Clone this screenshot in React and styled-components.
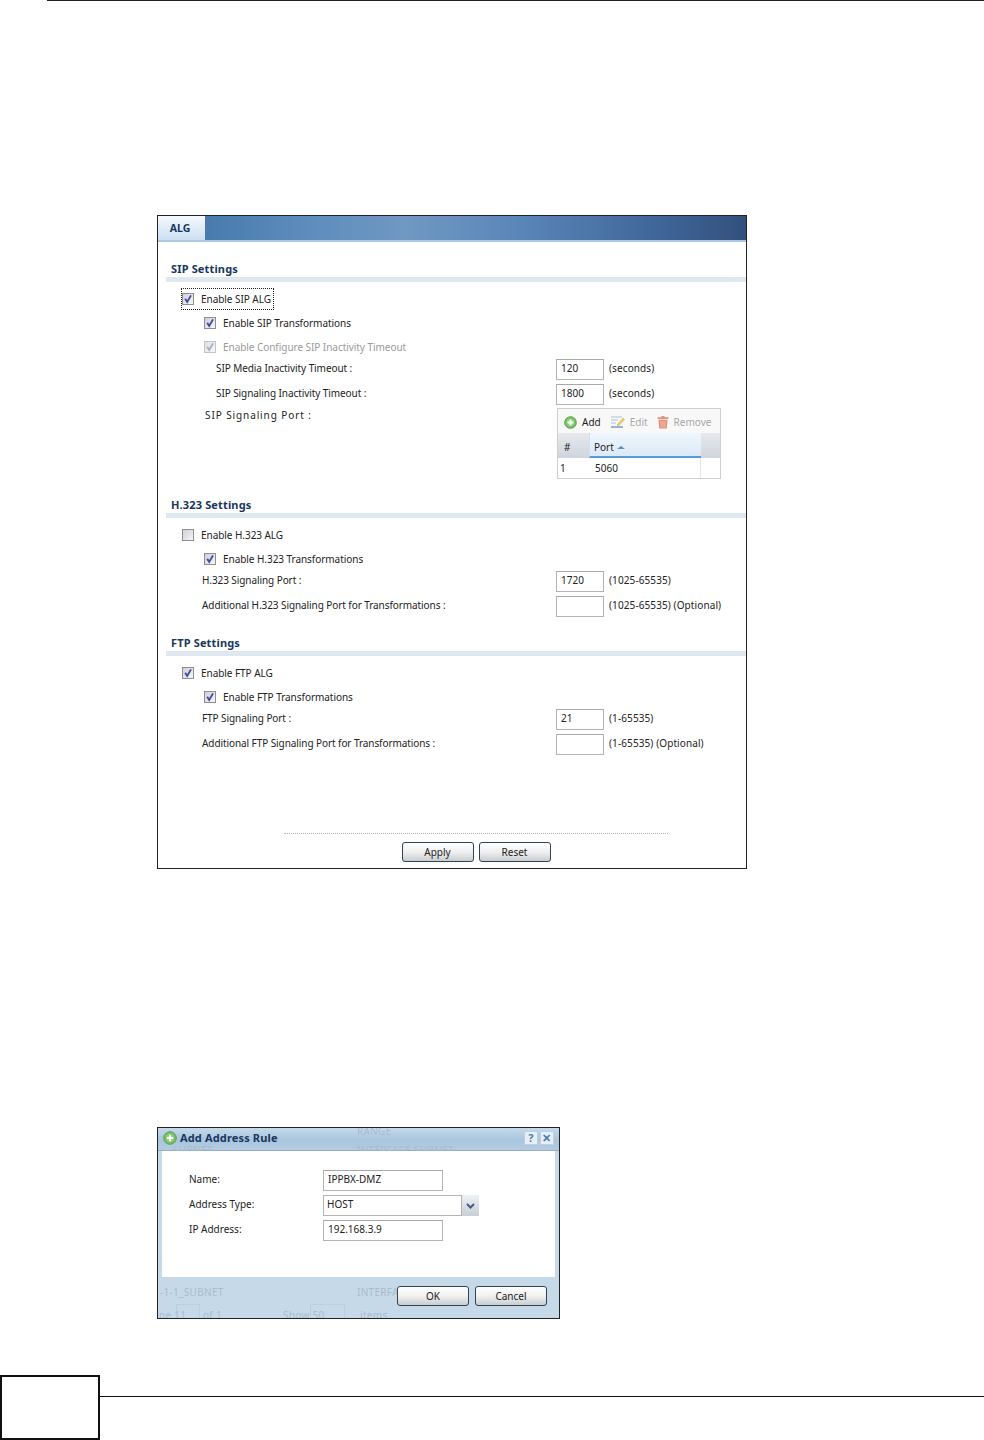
import React from "react";
import styled, { createGlobalStyle } from "styled-components";

//#region Styled Components
const Global = createGlobalStyle`
  html, body {
    margin: 0;
    background: #fff;
    font-family: "Noto Sans", "Liberation Sans", sans-serif;
    font-size: 10px;
    color: #222;
  }
`;
const Page = styled.div`
  width: 984px;
  height: 1440px;
  overflow: hidden;
  display: flex;
  flex-flow: column nowrap;
`;
const TopRule = styled.div`
  height: 1px;
  margin-left: 47px;
  background: #222;
`;
const Panel = styled.div`
  box-sizing: border-box;
  display: flex;
  flex-flow: column nowrap;
  width: 590px;
  height: 654px;
  margin: 214px 0 0 157px;
  border: 1px solid #222;
`;
const TabBar = styled.div`
  display: flex;
  height: 24px;
  border-bottom: 2px solid #a9c8e4;
  background: linear-gradient(90deg, #3f72a8 0%, #5d8cbc 25%, #6f98c2 42%, #5a85b8 62%, #3f6699 85%, #33507c 100%);
`;
const Tab = styled.div`
  width: 47px;
  padding-right: 3px;
  box-sizing: border-box;
  display: flex;
  align-items: center;
  justify-content: center;
  background: linear-gradient(#f5f9fd, #cbdff2);
  color: #17375e;
  font-weight: 700;
  font-size: 10.5px;
`;
const Section = styled.section`
  margin-top: ${p => p.$top}px;
  padding-left: 8px;
`;
const Heading = styled.h3`
  margin: 0 0 0 5px;
  height: 16px;
  line-height: 15px;
  color: #17375e;
  font-size: 11px;
  font-weight: 700;
  letter-spacing: 0.15px;
`;
const Divider = styled.div`
  height: 5px;
  margin-bottom: 5px;
  background: #dfe8ef;
`;
const CheckRow = styled.div`
  height: 24px;
  display: flex;
  align-items: center;
  padding-left: ${p => p.$indent}px;
  color: ${p => (p.$muted ? "#9a9a9a" : "#222")};
`;
const CheckLabel = styled.label`
  display: inline-flex;
  align-items: center;
  gap: 7px;
  height: 20px;
  padding-right: 2px;
  letter-spacing: -0.05px;
  outline: ${p => (p.$focus ? "1px dotted #222" : "none")};
`;
const Box = styled.span`
  box-sizing: border-box;
  width: 12px;
  height: 12px;
  border: 1px solid ${p => (p.$muted ? "#c4c4c4" : "#8f8f8f")};
  background: linear-gradient(135deg, ${p => (p.$muted ? "#e0e0e2" : "#cfcfd6")}, #f7f7f9);
  display: flex;
  align-items: center;
  justify-content: center;
`;
const FieldRow = styled.div`
  display: grid;
  grid-template-columns: 390px 48px 1fr;
  height: 25px;
`;
const FieldLabel = styled.div`
  padding-left: ${p => p.$indent}px;
  line-height: 19px;
  letter-spacing: -0.08px;
`;
const Input = styled.div`
  box-sizing: border-box;
  width: ${p => p.$w || 48}px;
  height: 21px;
  padding-left: 4px;
  line-height: 16px;
  border: 1px solid #b4b4b4;
  border-top-color: #a8a8a8;
  background: #fff;
  color: #222;
`;
const Hint = styled.div`
  padding-left: 5px;
  line-height: 19px;
  white-space: nowrap;
  letter-spacing: 0.1px;
`;
const PortRow = styled.div`
  display: grid;
  grid-template-columns: 391px 164px;
  margin-top: -1px;
`;
const PortLabel = styled.div`
  padding: 0 0 0 39px;
  line-height: 14px;
  letter-spacing: 0.9px;
`;
const PortTable = styled.div`
  box-sizing: border-box;
  height: 71px;
  border: 1px solid #cfcfcf;
`;
const Toolbar = styled.div`
  box-sizing: border-box;
  height: 24px;
  display: flex;
  align-items: center;
  padding: 2px 0 0 6px;
  background: #f8f8f8;
`;
const ToolItem = styled.span`
  display: inline-flex;
  align-items: center;
  gap: 5px;
  margin-right: 9px;
  color: ${p => (p.$disabled ? "#a8a8a8" : "#222")};
`;
const HeadRow = styled.div`
  display: grid;
  grid-template-columns: 31px 112px 1fr;
  grid-template-rows: 25px;
  height: 25px;
  background: linear-gradient(#e6e9ec, #cdd5dc);
`;
const HeadCell = styled.div`
  box-sizing: border-box;
  height: 25px;
  padding: 3px 0 0 ${p => p.$pad}px;
  line-height: 22px;
  ${p => p.$sorted && "background: linear-gradient(#f0f7fd, #dbe9f7); border-bottom: 2px solid #5a9bd5; border-left: 1px solid #cfe0f0;"}
`;
const SortArrow = styled.span`
  display: inline-block;
  margin-left: 3px;
  vertical-align: 2px;
  border: 4px solid transparent;
  border-top: 0;
  border-bottom: 3px solid #5a8fc7;
`;
const BodyRow = styled.div`
  display: grid;
  grid-template-columns: 31px 112px 1fr;
  height: 20px;
  line-height: 20px;
`;
const BodyCell = styled.div`
  padding-left: ${p => p.$pad}px;
  border-right: ${p => (p.$line ? "1px solid #e4e4e4" : "0")};
`;
const ActionBar = styled.div`
  margin-top: auto;
  padding: 0 0 6px 48px;
  display: flex;
  flex-flow: column nowrap;
  align-items: center;
`;
const Dotted = styled.div`
  width: 384px;
  border-top: 1px dotted #b5b5b5;
`;
const ButtonRow = styled.div`
  display: flex;
  gap: ${p => p.$gap}px;
  margin-top: ${p => p.$top}px;
`;
const Button = styled.button`
  box-sizing: border-box;
  width: 72px;
  height: 20px;
  padding: 0;
  border: 1px solid #2f4358;
  border-radius: 3px;
  background: linear-gradient(#ffffff 0%, #f0f0f0 50%, #c9cdd1 100%);
  color: #222;
  font-family: inherit;
  font-size: 10px;
`;
const Dialog = styled.div`
  position: relative;
  box-sizing: border-box;
  width: 403px;
  height: 192px;
  margin: 258px 0 0 157px;
  border: 1px solid #222;
  background: #c6d9e8;
  display: flex;
  flex-flow: column nowrap;
  overflow: hidden;
`;
const Ghost = styled.span`
  position: absolute;
  left: ${p => p.$x}px;
  top: ${p => p.$y}px;
  color: #a8bccd;
  letter-spacing: 0.3px;
  white-space: nowrap;
`;
const GhostCell = styled.span`
  position: absolute;
  left: ${p => p.$x}px;
  top: 176px;
  width: ${p => p.$w}px;
  height: 20px;
  border: 1px solid #bccfdf;
`;
const DialogTitle = styled.div`
  position: relative;
  box-sizing: border-box;
  height: 23px;
  display: flex;
  align-items: center;
  gap: 3px;
  padding: 0 5px 3px;
  border-bottom: 1px solid #94aec8;
  background: linear-gradient(#c5d9ea 0, #a9c5df 55%, #b4cbe0 100%);
  color: #17375e;
  font-weight: 700;
  font-size: 11px;
  letter-spacing: 0.15px;
`;
const TitleText = styled.span`
  flex: 1;
`;
const TitleBtn = styled.span`
  box-sizing: border-box;
  width: 14px;
  height: 14px;
  margin-left: -1px;
  display: flex;
  align-items: center;
  justify-content: center;
  background: #e6eff7;
  border: 1px solid #bdd0e2;
  color: #4a7db0;
  font-size: 11px;
`;
const DialogBody = styled.div`
  position: relative;
  box-sizing: border-box;
  height: 126px;
  margin: 0 4px;
  padding-top: 19px;
  background: #fff;
`;
const DialogRow = styled.div`
  display: grid;
  grid-template-columns: 161px auto;
  justify-content: start;
  height: 25px;
`;
const DialogLabel = styled.div`
  padding-left: 27px;
  line-height: 19px;
`;
const Select = styled.div`
  box-sizing: border-box;
  width: 156px;
  height: 21px;
  display: flex;
  border: 1px solid #b4b4b4;
  line-height: 17px;
  padding-left: 3px;
`;
const SelectValue = styled.span`
  flex: 1;
`;
const SelectArrow = styled.span`
  width: 17px;
  margin: -1px -1px -1px 0;
  display: flex;
  align-items: center;
  justify-content: center;
  background: linear-gradient(#eef1f4, #c9ced3);
  border-left: 1px solid #b4b4b4;
`;
const DialogActions = styled.div`
  position: relative;
  display: flex;
  justify-content: flex-end;
  padding-right: 12px;
`;
const Footer = styled.footer`
  display: flex;
  margin-top: 56px;
  height: 65px;
`;
const PageBox = styled.div`
  box-sizing: border-box;
  width: 100px;
  height: 65px;
  border: 2px solid #111;
`;
const FooterRule = styled.div`
  flex: 1;
  height: 1px;
  margin-top: 21px;
  background: #111;
`;
//#endregion

const Check = ({ muted }) => (
  <Box $muted={muted}>
    <svg width="10" height="10" viewBox="0 0 10 10" fill="none">
      <path d="M2.2 4.8 L4.2 8 L8 1.4" stroke={muted ? "#a9b0c4" : "#3f4f9e"} strokeWidth="1.9" />
    </svg>
  </Box>
);

const AddIcon = ({ size = 13 }) => (
  <svg width={size} height={size} viewBox="0 0 14 14">
    <circle cx="7" cy="7" r="6.3" fill="#74bd62" stroke="#5ea35a" />
    <circle cx="7" cy="7" r="4.2" fill="#8fd07e" />
    <path d="M7 3.8 V10.2 M3.8 7 H10.2" stroke="#fff" strokeWidth="2" />
  </svg>
);

const EditIcon = () => (
  <svg width="15" height="14" viewBox="0 0 15 14" fill="none">
    <path d="M1 2 H12 M1 5 H8 M1 8 H6" stroke="#a9bfd8" strokeWidth="1.2" />
    <path d="M1 12 H13" stroke="#7fa6d0" strokeWidth="1.6" />
    <path d="M7 10 L13 3 L14.5 4.5 L8.5 11 Z" fill="#efcf78" stroke="#d2a94e" strokeWidth="0.6" />
  </svg>
);

const TrashIcon = () => (
  <svg width="12" height="14" viewBox="0 0 12 14">
    <path d="M4.5 1 H7.5 V2.2 H11.5 V4 H0.5 V2.2 H4.5 Z" fill="#e2917a" />
    <path d="M1.5 4.8 H10.5 L9.8 13.5 H2.2 Z" fill="#e58f76" />
    <path d="M4 6 V12.5 M6 6 V12.5 M8 6 V12.5" stroke="#f6c9ba" strokeWidth="0.8" />
  </svg>
);

const CheckItem = ({ indent, focus, muted, checked = true, children }) => (
  <CheckRow $indent={indent} $muted={muted}>
    <CheckLabel $focus={focus}>
      {checked ? <Check muted={muted} /> : <Box />}
      {children}
    </CheckLabel>
  </CheckRow>
);

const Field = ({ label, indent, value, hint }) => (
  <FieldRow>
    <FieldLabel $indent={indent}>{label}</FieldLabel>
    <Input>{value}</Input>
    <Hint>{hint}</Hint>
  </FieldRow>
);

const App = () => (
  <Page>
    <Global />
    <TopRule />
    <Panel>
      <TabBar>
        <Tab>ALG</Tab>
      </TabBar>
      <Section $top={19}>
        <Heading>SIP Settings</Heading>
        <Divider />
        <CheckItem indent={16} focus>Enable SIP ALG</CheckItem>
        <CheckItem indent={38}>Enable SIP Transformations</CheckItem>
        <CheckItem indent={38} muted>Enable Configure SIP Inactivity Timeout</CheckItem>
        <Field label="SIP Media Inactivity Timeout :" indent={50} value="120" hint="(seconds)" />
        <Field label="SIP Signaling Inactivity Timeout :" indent={50} value="1800" hint="(seconds)" />
        <PortRow>
          <PortLabel>SIP Signaling Port :</PortLabel>
          <PortTable>
            <Toolbar>
              <ToolItem><AddIcon />Add</ToolItem>
              <ToolItem $disabled><EditIcon />Edit</ToolItem>
              <ToolItem $disabled><TrashIcon />Remove</ToolItem>
            </Toolbar>
            <HeadRow>
              <HeadCell $pad={6}>#</HeadCell>
              <HeadCell $pad={4} $sorted>Port<SortArrow /></HeadCell>
              <HeadCell />
            </HeadRow>
            <BodyRow>
              <BodyCell $pad={2}>1</BodyCell>
              <BodyCell $pad={6} $line>5060</BodyCell>
              <BodyCell />
            </BodyRow>
          </PortTable>
        </PortRow>
      </Section>
      <Section $top={18}>
        <Heading>H.323 Settings</Heading>
        <Divider />
        <CheckItem indent={16} checked={false}>Enable H.323 ALG</CheckItem>
        <CheckItem indent={38}>Enable H.323 Transformations</CheckItem>
        <Field label="H.323 Signaling Port :" indent={36} value="1720" hint="(1025-65535)" />
        <Field label="Additional H.323 Signaling Port for Transformations :" indent={36} hint="(1025-65535) (Optional)" />
      </Section>
      <Section $top={14}>
        <Heading>FTP Settings</Heading>
        <Divider />
        <CheckItem indent={16}>Enable FTP ALG</CheckItem>
        <CheckItem indent={38}>Enable FTP Transformations</CheckItem>
        <Field label="FTP Signaling Port :" indent={36} value="21" hint="(1-65535)" />
        <Field label="Additional FTP Signaling Port for Transformations :" indent={36} hint="(1-65535) (Optional)" />
      </Section>
      <ActionBar>
        <Dotted />
        <ButtonRow $gap={5} $top={8}>
          <Button>Apply</Button>
          <Button>Reset</Button>
        </ButtonRow>
      </ActionBar>
    </Panel>
    <Dialog>
      <DialogTitle>
        <AddIcon size={14} />
        <TitleText>Add Address Rule</TitleText>
        <TitleBtn>?</TitleBtn>
        <TitleBtn>✕</TitleBtn>
      </DialogTitle>
      <Ghost $x={199} $y={-4}>RANGE</Ghost>
      <Ghost $x={199} $y={15}>INTERFACE SUBNET</Ghost>
      <Ghost $x={15} $y={15}>SUBNET</Ghost>
      <Ghost $x={2} $y={157}>-1-1_SUBNET</Ghost>
      <Ghost $x={199} $y={157}>INTERFA</Ghost>
      <GhostCell $x={18} $w={22} />
      <GhostCell $x={152} $w={33} />
      <Ghost $x={1} $y={180}>ne 11</Ghost>
      <Ghost $x={45} $y={180}>of 1</Ghost>
      <Ghost $x={125} $y={180}>Show 50</Ghost>
      <Ghost $x={202} $y={180}>items</Ghost>
      <DialogBody>
        <DialogRow>
          <DialogLabel>Name:</DialogLabel>
          <Input $w={120}>IPPBX-DMZ</Input>
        </DialogRow>
        <DialogRow>
          <DialogLabel>Address Type:</DialogLabel>
          <Select>
            <SelectValue>HOST</SelectValue>
            <SelectArrow>
              <svg width="9" height="6" viewBox="0 0 9 6" fill="none">
                <path d="M1 1 L4.5 4.5 L8 1" stroke="#3f5f86" strokeWidth="2" />
              </svg>
            </SelectArrow>
          </Select>
        </DialogRow>
        <DialogRow>
          <DialogLabel>IP Address:</DialogLabel>
          <Input $w={120}>192.168.3.9</Input>
        </DialogRow>
      </DialogBody>
      <DialogActions>
        <ButtonRow $gap={6} $top={9}>
          <Button>OK</Button>
          <Button>Cancel</Button>
        </ButtonRow>
      </DialogActions>
    </Dialog>
    <Footer>
      <PageBox />
      <FooterRule />
    </Footer>
  </Page>
);

export default App;
